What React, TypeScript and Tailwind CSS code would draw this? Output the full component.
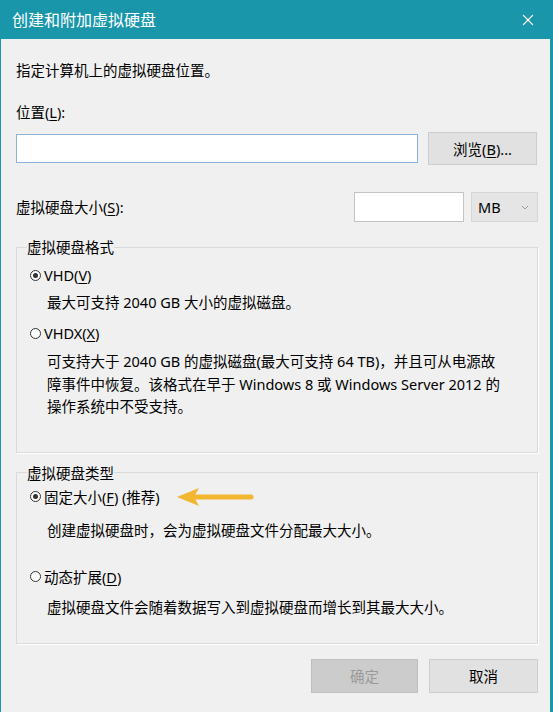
import React from "react";

const font = "font-['Noto_Sans','Noto_Sans_CJK_SC',sans-serif]";

function Radio({ checked }: { checked?: boolean }) {
  return (
    <span className="flex h-[11px] w-[11px] shrink-0 items-center justify-center rounded-full border border-[#333] bg-white">
      {checked && <span className="h-[5px] w-[5px] rounded-full bg-[#333]" />}
    </span>
  );
}

function Arrow() {
  return (
    <svg width="78" height="22" viewBox="0 0 78 22" className="ml-[13px]">
      <path d="M18 11 H75" stroke="#f2b630" strokeWidth="5" strokeLinecap="round" />
      <path d="M1 11 L23 2 L18 11 L23 20 Z" fill="#f2b630" />
    </svg>
  );
}

function App() {
  return (
    <div
      className={`${font} flex h-[712px] w-[553px] flex-col border-l border-r-[3px] border-[#1a96ab] bg-[#f0f0f0] text-[14.5px] text-black`}
    >
      {/* Title bar */}
      <div className="-ml-px -mr-[3px] flex h-[39px] shrink-0 items-center justify-between bg-[#1a96ab] pl-[12px] pr-[19px] text-white">
        <span className="text-[16px] leading-[20px]">创建和附加虚拟硬盘</span>
        <svg width="12" height="12" viewBox="0 0 12 12">
          <path d="M1 1 L11 11 M11 1 L1 11" stroke="#fff" strokeWidth="1.1" />
        </svg>
      </div>

      <div className="flex flex-col pl-[15px] pr-[12px]">
        <p className="mt-[21px] leading-[20px]">指定计算机上的虚拟硬盘位置。</p>
        <p className="mt-[22px] leading-[20px]">
          位置(<u className="underline-offset-2">L</u>):
        </p>

        <div className="mt-[10px] flex h-[33px] items-center gap-[10px]">
          <input
            className="h-[29px] w-[402px] border border-[#8eb1d8] bg-white outline-none"
            readOnly
          />
          <button className="flex h-[33px] w-[109px] items-center justify-center border border-[#cdcdcd] bg-[#e1e1e1] leading-[20px]">
            浏览(<u className="underline-offset-2">B</u>)...
          </button>
        </div>

        <div className="mt-[27px] flex h-[30px] items-center">
          <span className="flex-1 leading-[20px]">
            虚拟硬盘大小(<u className="underline-offset-2">S</u>):
          </span>
          <input
            className="h-[30px] w-[110px] border border-[#c4c4c4] bg-white outline-none"
            readOnly
          />
          <div className="ml-[7px] flex h-[30px] w-[67px] items-center justify-between border border-[#d6d6d6] bg-[#e5e5e5] pl-[6px] pr-[8px]">
            <span className="leading-[20px]">MB</span>
            <svg width="8" height="5" viewBox="0 0 8 5">
              <path d="M1 1 L4 4 L7 1" stroke="#9a9a9a" strokeWidth="1" fill="none" />
            </svg>
          </div>
        </div>

        {/* Format group */}
        <fieldset className="mt-[15px] border border-[#dadada] pb-[34px] pl-[10px] shadow-[1px_1px_0_#fff]">
          <legend className="leading-[20px]">虚拟硬盘格式</legend>
          <div className="pl-[3px]">
            <label className="mt-[8px] flex items-center gap-[3px] leading-[20px]">
              <Radio checked />
              <span>
                VHD(<u className="underline-offset-2">V</u>)
              </span>
            </label>
            <p className="ml-[17px] mt-[7px] leading-[20px]">最大可支持 2040 GB 大小的虚拟磁盘。</p>
            <label className="mt-[11px] flex items-center gap-[3px] leading-[20px]">
              <Radio />
              <span>
                VHDX(<u className="underline-offset-2">X</u>)
              </span>
            </label>
            <p className="ml-[17px] mt-[7px] leading-[22.5px]">
              可支持大于 2040 GB 的虚拟磁盘(最大可支持 64 TB)，并且可从电源故
              <br />
              障事件中恢复。该格式在早于 Windows 8 或 Windows Server 2012 的
              <br />
              操作系统中不受支持。
            </p>
          </div>
        </fieldset>

        {/* Type group */}
        <fieldset className="mt-[10px] border border-[#dadada] pb-[26px] pl-[10px] shadow-[1px_1px_0_#fff]">
          <legend className="leading-[20px]">虚拟硬盘类型</legend>
          <div className="pl-[3px]">
            <label className="mt-[3px] flex items-center gap-[3px] leading-[20px]">
              <Radio checked />
              <span>
                固定大小(<u className="underline-offset-2">F</u>) (推荐)
              </span>
              <Arrow />
            </label>
            <p className="ml-[17px] mt-[12px] leading-[20px]">
              创建虚拟硬盘时，会为虚拟硬盘文件分配最大大小。
            </p>
            <label className="mt-[27px] flex items-center gap-[3px] leading-[20px]">
              <Radio />
              <span>
                动态扩展(<u className="underline-offset-2">D</u>)
              </span>
            </label>
            <p className="ml-[17px] mt-[10px] leading-[20px]">
              虚拟硬盘文件会随着数据写入到虚拟硬盘而增长到其最大大小。
            </p>
          </div>
        </fieldset>

        <div className="mt-[15px] flex justify-end gap-[11px]">
          <button
            disabled
            className="flex h-[34px] w-[107px] items-center justify-center border border-[#bfbfbf] bg-[#cccccc] leading-[20px] text-[#9a9a9a]"
          >
            确定
          </button>
          <button className="flex h-[34px] w-[109px] items-center justify-center border border-[#cdcdcd] bg-[#e1e1e1] leading-[20px]">
            取消
          </button>
        </div>
      </div>
    </div>
  );
}

export default App;
